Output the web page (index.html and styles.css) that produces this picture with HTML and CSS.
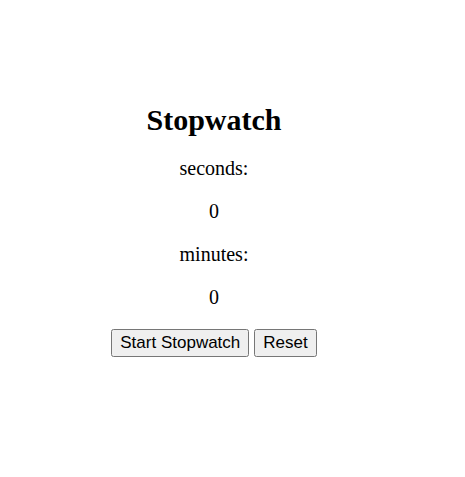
FILE: index.html
```html
<!DOCTYPE html>
<html>
<head>
<meta charset="utf-8">
<title>Stopwatch</title>
<link rel="stylesheet" href="styles.css">
</head>
<body>
<div class="app">
  <h1 class="title">Stopwatch</h1>
  <p class="label">seconds:</p>
  <p class="value">0</p>
  <p class="label">minutes:</p>
  <p class="value">0</p>
  <div class="controls">
    <button class="btn">Start Stopwatch</button>
    <button class="btn">Reset</button>
  </div>
</div>
</body>
</html>
```
FILE: styles.css
```css
html, body {
  margin: 0;
  padding: 0;
  background: #ffffff;
}
body {
  font-family: "Liberation Serif", "Times New Roman", serif;
  font-size: 20px;
  color: #000000;
}
.app {
  width: 428px;
  padding-top: 103px;
  text-align: center;
}
.title {
  font-size: 30px;
  font-weight: bold;
  margin: 0 0 20px 0;
}
.label, .value {
  margin: 20px 0;
}
.controls {
  margin-top: 20px;
}
.btn {
  font-family: "Liberation Sans", Arial, sans-serif;
  font-size: 17px;
  padding: 2px 7px;
}
```
